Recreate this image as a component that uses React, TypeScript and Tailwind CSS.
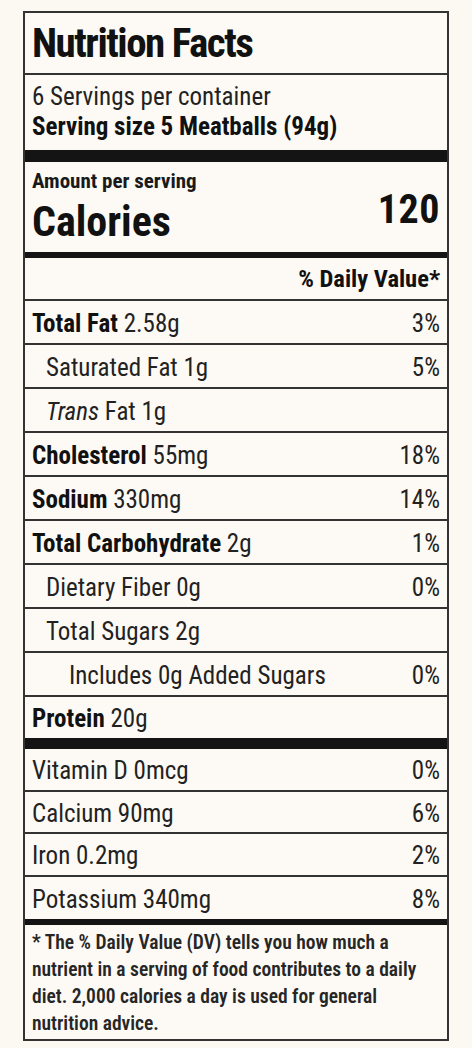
const rows = [
  { name: 'Total Fat', amount: '2.58g', dv: '3%', bold: true, indent: 0 },
  { name: 'Saturated Fat', amount: '1g', dv: '5%', bold: false, indent: 1 },
  { name: 'Trans', amount: 'Fat 1g', dv: '', bold: false, indent: 1, italic: true },
  { name: 'Cholesterol', amount: '55mg', dv: '18%', bold: true, indent: 0 },
  { name: 'Sodium', amount: '330mg', dv: '14%', bold: true, indent: 0 },
  { name: 'Total Carbohydrate', amount: '2g', dv: '1%', bold: true, indent: 0 },
  { name: 'Dietary Fiber', amount: '0g', dv: '0%', bold: false, indent: 1 },
  { name: 'Total Sugars', amount: '2g', dv: '', bold: false, indent: 1 },
  { name: 'Includes 0g Added Sugars', amount: '', dv: '0%', bold: false, indent: 2 },
];

const vitamins = [
  { label: 'Vitamin D 0mcg', dv: '0%' },
  { label: 'Calcium 90mg', dv: '6%' },
  { label: 'Iron 0.2mg', dv: '2%' },
  { label: 'Potassium 340mg', dv: '8%' },
];

const indents = ['pl-[7px]', 'pl-[21px]', 'pl-[44px]'];

export default function App() {
  return (
    <div className="min-h-screen w-[472px] bg-[#fcf9f3] pt-[11px] px-[23px] text-[#222] [font-family:'Roboto',sans-serif] [font-stretch:75%]">
      <div className="border-2 border-[#333] bg-[#fdfaf5]">
        <div className="h-[62px] border-b-2 border-[#333] px-[7px] flex items-center">
          <h1 className="text-[41px] font-bold leading-none tracking-[-1.5px] text-[#111]">Nutrition Facts</h1>
        </div>
        <div className="h-[75px] px-[7px] pt-[7px] text-[25px] leading-[30px]">
          <p>6 Servings per container</p>
          <p className="font-bold text-[#111]">Serving size 5 Meatballs (94g)</p>
        </div>
        <div className="h-[12px] bg-[#141414]" />
        <div className="h-[90px] px-[7px] pt-[8px] flex justify-between">
          <div>
            <p className="text-[21px] font-bold leading-[22px] text-[#1a1a1a]">Amount per serving</p>
            <p className="mt-[7px] text-[42px] font-bold leading-[46px] text-[#111]">Calories</p>
          </div>
          <p className="pt-[20px] text-[40px] font-bold leading-none tracking-[0.5px] text-[#111]">120</p>
        </div>
        <div className="h-[6px] bg-[#141414]" />
        <div className="h-[43px] border-b-2 border-[#333] px-[7px] pt-[1px] flex items-center justify-end">
          <span className="text-[24.5px] font-bold text-[#111]">% Daily Value*</span>
        </div>
        {rows.map((r) => (
          <div
            key={r.name}
            className={`h-[44px] border-b-2 border-[#333] pr-[7px] pt-[3px] flex items-center justify-between text-[25px] ${indents[r.indent]}`}
          >
            <span>
              {r.italic ? (
                <i>{r.name}</i>
              ) : (
                <span className={r.bold ? 'font-bold text-[#111]' : ''}>{r.name}</span>
              )}
              {r.amount ? ` ${r.amount}` : ''}
            </span>
            <span>{r.dv}</span>
          </div>
        ))}
        <div className="h-[41px] pl-[7px] pt-[3px] flex items-center text-[25px]">
          <span>
            <span className="font-bold text-[#111]">Protein</span> 20g
          </span>
        </div>
        <div className="h-[11px] bg-[#141414]" />
        {vitamins.map((v, i) => (
          <div
            key={v.label}
            className={`h-[42.5px] px-[7px] pt-[3px] flex items-center justify-between text-[25px] ${i < vitamins.length - 1 ? 'border-b-2 border-[#333]' : ''}`}
          >
            <span>{v.label}</span>
            <span>{v.dv}</span>
          </div>
        ))}
        <div className="h-[6px] bg-[#141414]" />
        <p className="px-[7px] pt-[4px] pb-[2px] text-[19.5px] leading-[27px] font-semibold text-[#262626]">
          * The % Daily Value (DV) tells you how much a nutrient in a serving of food contributes to a daily diet. 2,000 calories a day is used for general nutrition advice.
        </p>
      </div>
    </div>
  );
}
